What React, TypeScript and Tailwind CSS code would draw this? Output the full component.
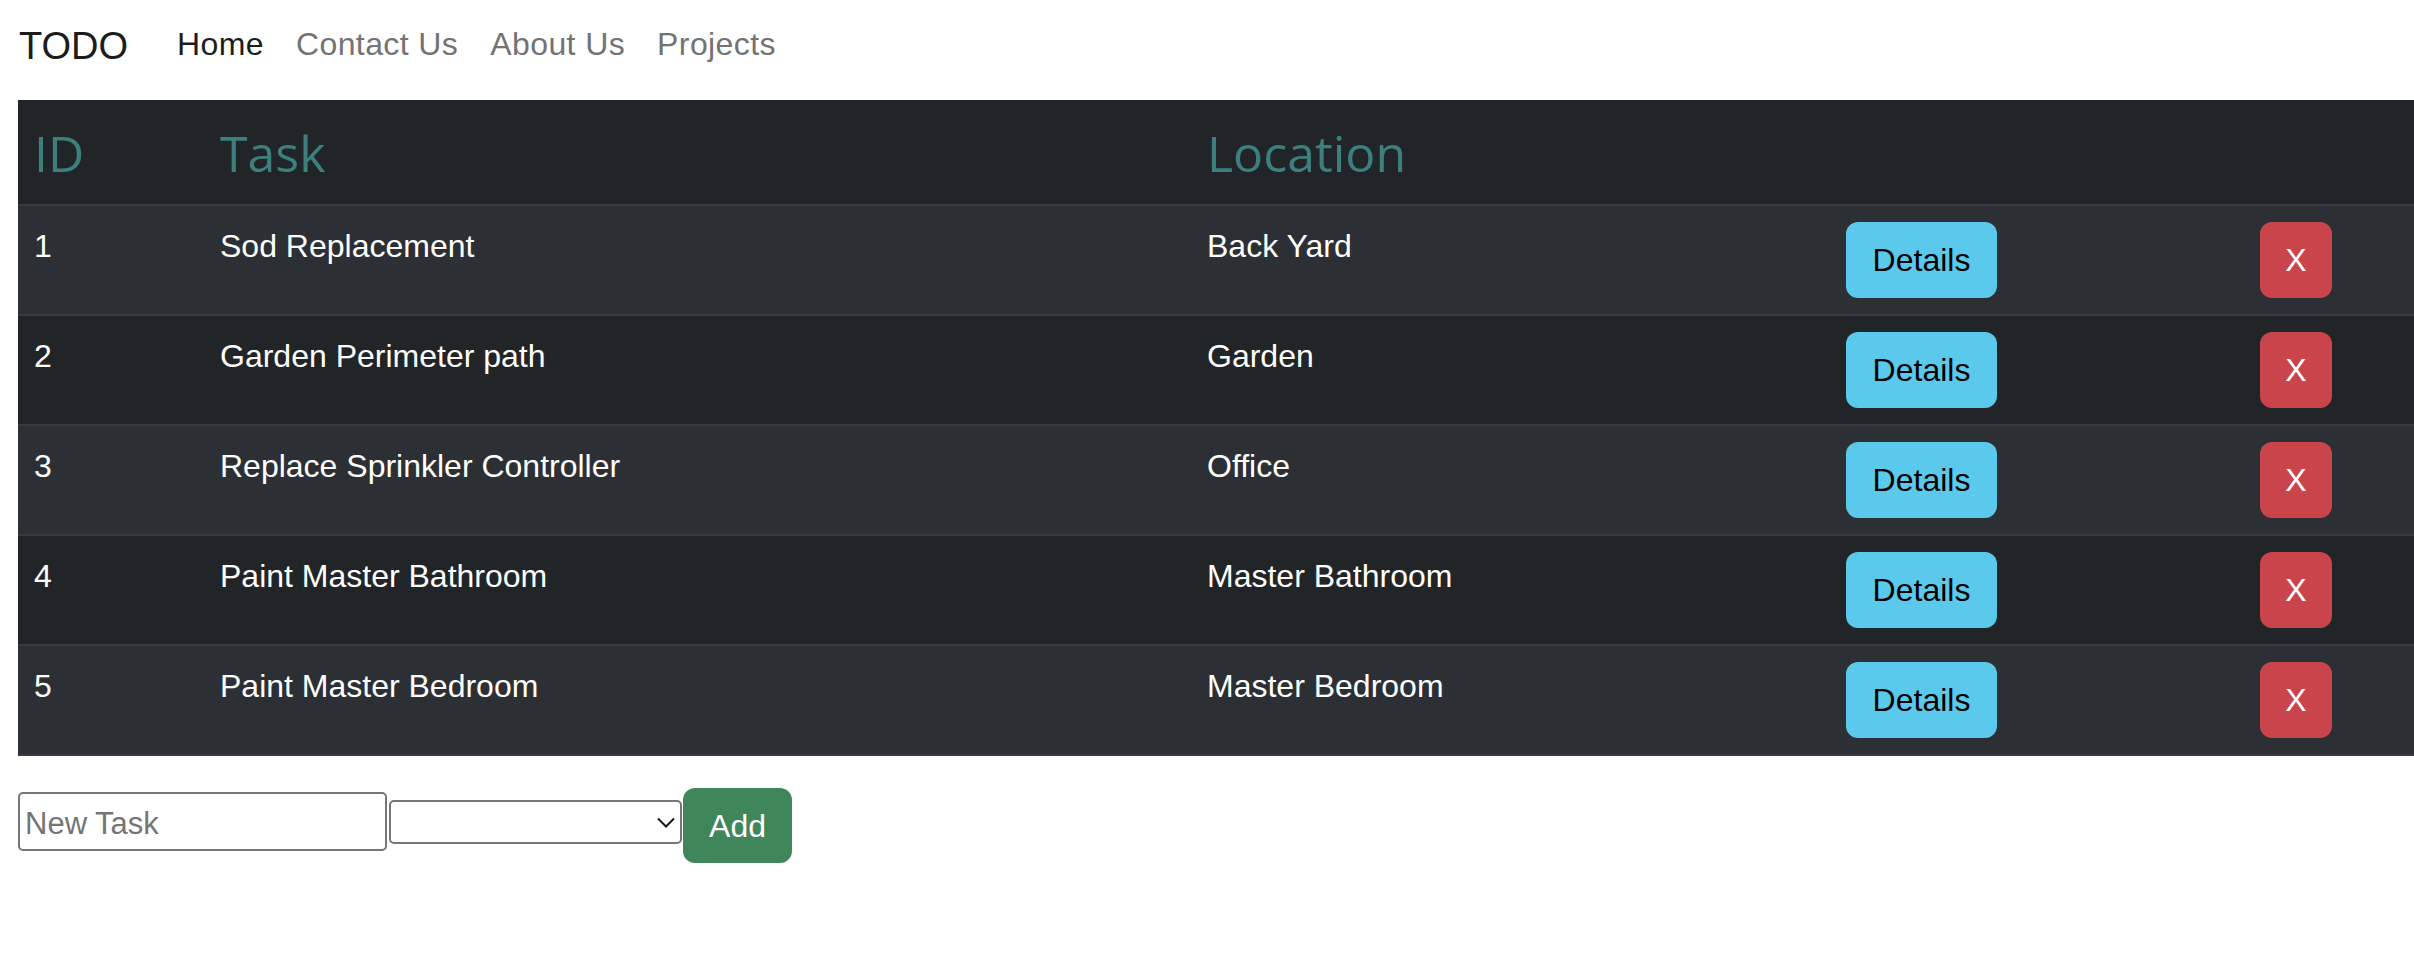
import React from 'react';

type Task = {
  id: number;
  task: string;
  location: string;
};

const tasks: Task[] = [
  { id: 1, task: 'Sod Replacement', location: 'Back Yard' },
  { id: 2, task: 'Garden Perimeter path', location: 'Garden' },
  { id: 3, task: 'Replace Sprinkler Controller', location: 'Office' },
  { id: 4, task: 'Paint Master Bathroom', location: 'Master Bathroom' },
  { id: 5, task: 'Paint Master Bedroom', location: 'Master Bedroom' },
];

const navLinks = ['Home', 'Contact Us', 'About Us', 'Projects'];

export default function App() {
  return (
    <div className="min-h-[962px] bg-white font-['Liberation_Sans',Arial,sans-serif]">
      {/* Navbar */}
      <nav className="flex items-start h-[100px] pl-[19px]">
        <span className="mt-[16px] w-[142px] text-[38px] leading-[60px] text-[#1c1c1c]">
          TODO
        </span>
        {navLinks.map((link, i) => (
          <a
            key={link}
            href="#"
            className={`mt-[20px] px-[16px] text-[32px] leading-[48px] tracking-[0.4px] ${
              i === 0 ? 'text-[#1c1c1c]' : 'text-[#737373]'
            }`}
          >
            {link}
          </a>
        ))}
      </nav>

      {/* Task table */}
      <div className="pl-[18px]">
        <table className="w-full table-fixed border-collapse text-white">
          <colgroup>
            <col className="w-[186px]" />
            <col className="w-[987px]" />
            <col className="w-[639px]" />
            <col className="w-[414px]" />
            <col />
          </colgroup>
          <thead>
            <tr className="bg-[#222528]">
              {['ID', 'Task', 'Location', '', ''].map((h, i) => (
                <th
                  key={i}
                  className="border-b-2 border-[#373a3e] px-[16px] pt-[17px] pb-[15px] text-left align-top font-normal font-['Open_Sans',sans-serif] text-[50px] leading-[72px] text-[#3c7f7d]"
                >
                  {h}
                </th>
              ))}
            </tr>
          </thead>
          <tbody>
            {tasks.map((t, i) => {
              const rowBg = i % 2 === 0 ? 'bg-[#2c3035]' : 'bg-[#222528]';
              const cell =
                'border-b-2 border-[#373a3e] px-[16px] py-[16px] align-top text-[32px] leading-[48px]';
              return (
                <tr key={t.id} className={rowBg}>
                  <td className={cell}>{t.id}</td>
                  <td className={cell}>{t.task}</td>
                  <td className={cell}>{t.location}</td>
                  <td className={cell}>
                    <button className="flex h-[76px] w-[151px] items-center justify-center rounded-[12px] bg-[#5bc9ec] text-[32px] text-black">
                      Details
                    </button>
                  </td>
                  <td className={cell}>
                    <button className="flex h-[76px] w-[72px] items-center justify-center rounded-[12px] bg-[#ca454b] text-[32px] text-white">
                      X
                    </button>
                  </td>
                </tr>
              );
            })}
          </tbody>
        </table>
      </div>

      {/* New task form */}
      <div className="flex items-start mt-[32px] pl-[18px]">
        <input
          type="text"
          placeholder="New Task"
          className="mt-[4px] h-[59px] w-[369px] rounded-[5px] border-2 border-[#767676] px-[5px] pt-[5px] text-[31px] text-black outline-none placeholder:text-[#757575]"
        />
        <div className="relative ml-[2px] mt-[12px]">
          <select className="h-[44px] w-[293px] appearance-none rounded-[5px] border-2 border-[#767676] bg-white outline-none">
            <option value=""></option>
          </select>
          <svg
            className="pointer-events-none absolute left-[268px] top-[17px]"
            width="18"
            height="11"
            viewBox="0 0 18 11"
            fill="none"
          >
            <path d="M1 1.5L9 9.5L17 1.5" stroke="#1a1a1a" strokeWidth="2" />
          </svg>
        </div>
        <button className="ml-[1px] flex h-[75px] w-[109px] items-center justify-center rounded-[12px] bg-[#3f865a] text-[32px] text-white">
          Add
        </button>
      </div>
    </div>
  );
}
